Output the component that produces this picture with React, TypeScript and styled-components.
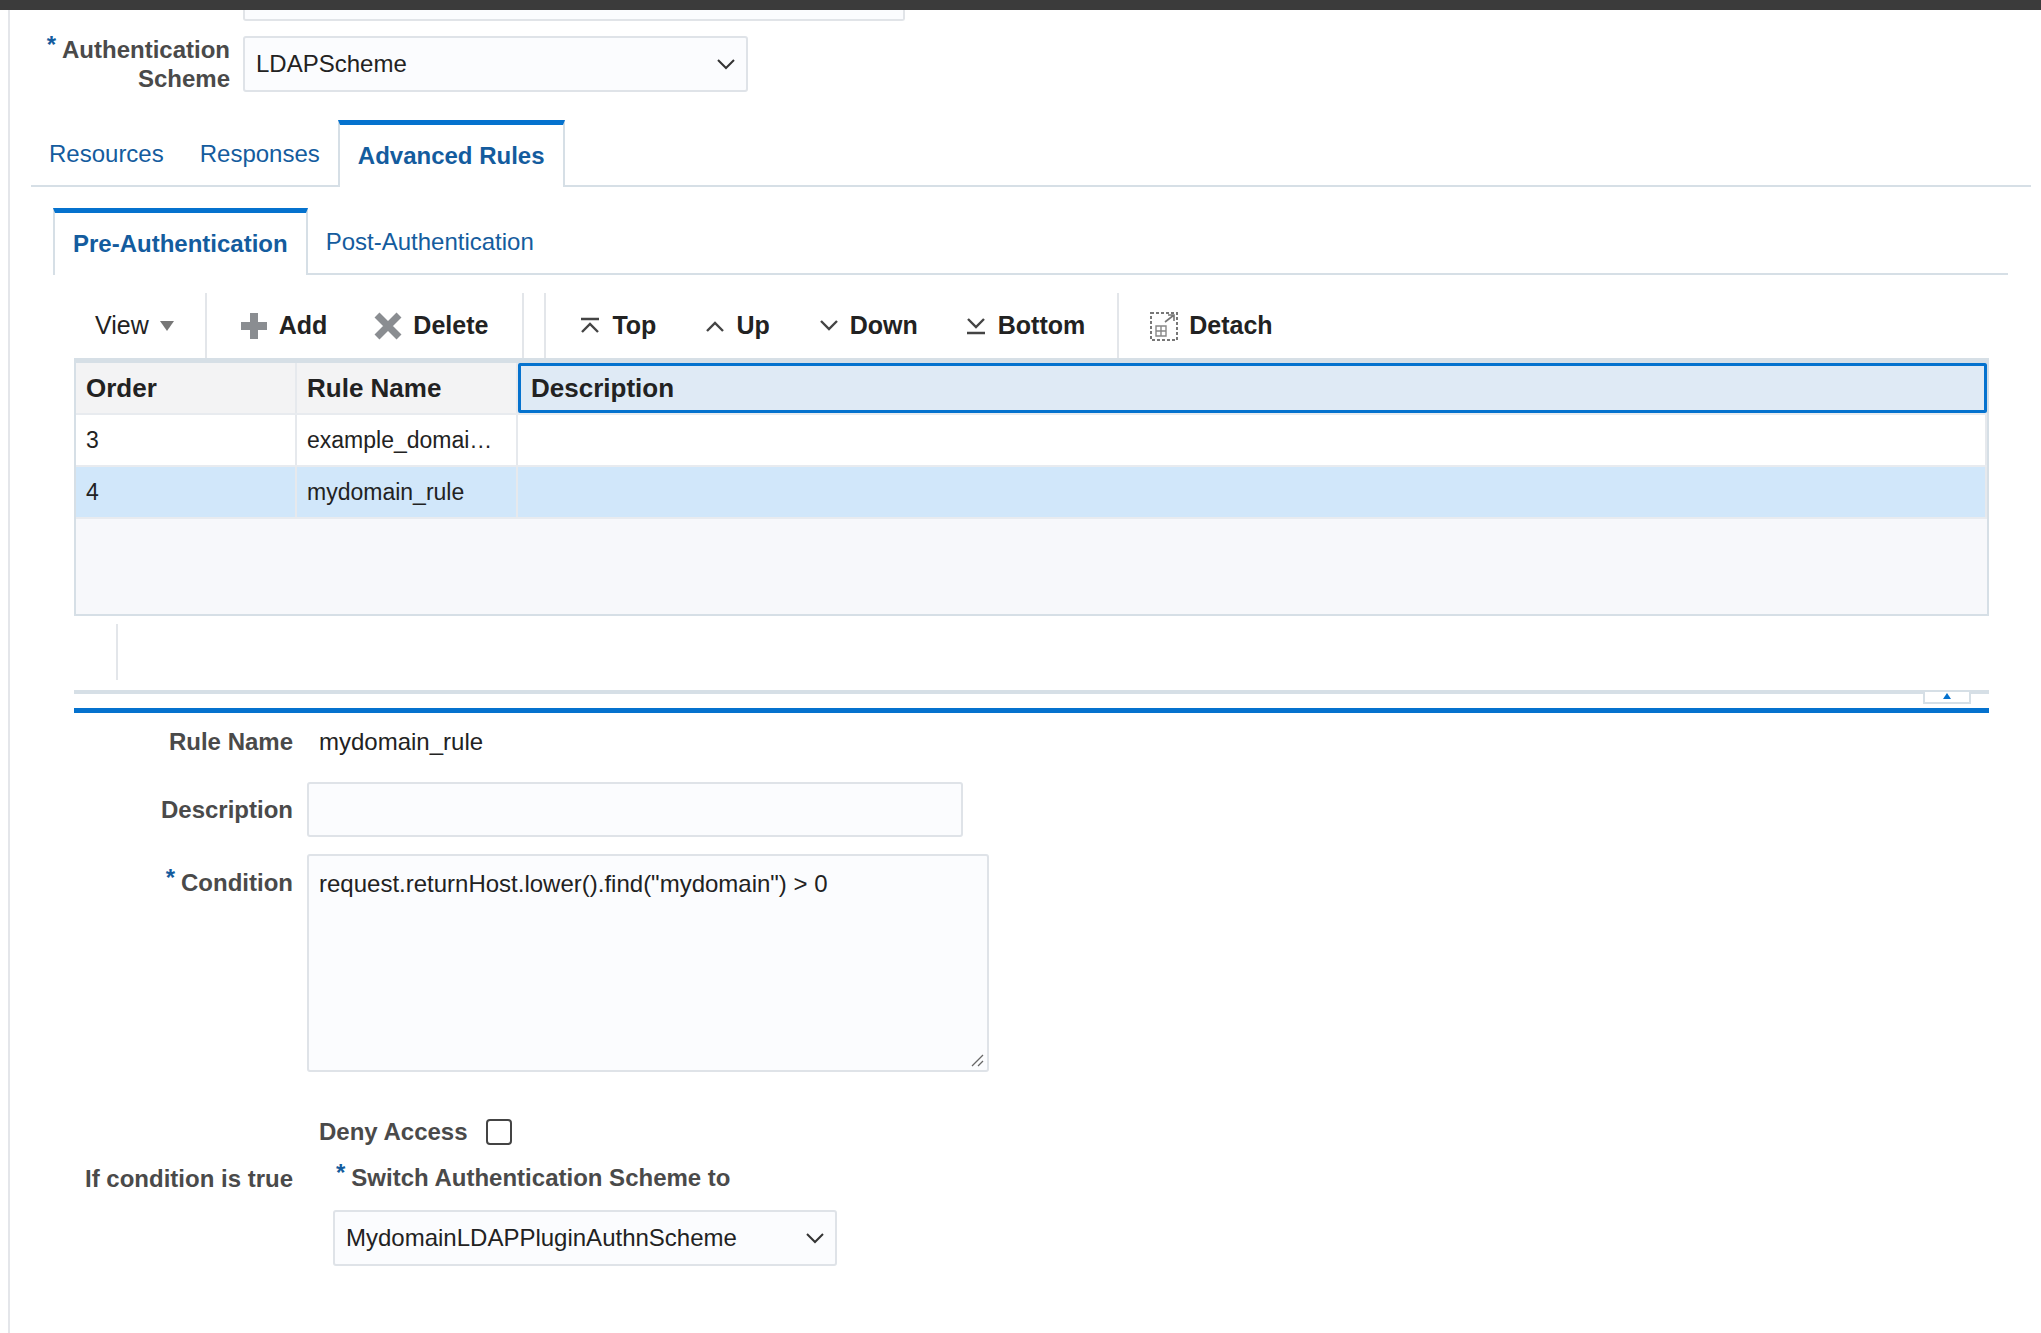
import React from "react"
import styled, { createGlobalStyle } from "styled-components"

const Global = createGlobalStyle`
  body {
    margin: 0;
    background: #fff;
    font-family: "Liberation Sans", Arial, sans-serif;
    color: #333;
  }
`

const Page = styled.div`
  width: 2041px;
  height: 1333px;
  overflow: hidden;
  border-top: 10px solid #3b3b3b;
  box-sizing: border-box;
  position: relative;
`

const LeftRule = styled.div`
  position: absolute;
  left: 8px;
  top: 0;
  bottom: 0;
  width: 2px;
  background: #e4e6ea;
`

const TopStub = styled.div`
  margin-left: 243px;
  width: 658px;
  height: 9px;
  border: 2px solid #e1e4e8;
  border-top: none;
  border-radius: 0 0 3px 3px;
  background: #fbfcfe;
`

const FieldRow = styled.div<{ $top: number; $align?: string }>`
  display: flex;
  align-items: ${p => p.$align || "center"};
  margin-top: ${p => p.$top}px;
`

const Label = styled.div<{ $w: number }>`
  width: ${p => p.$w}px;
  text-align: right;
  font-weight: bold;
  font-size: 24px;
  line-height: 29px;
  color: #4a4a4a;
  flex-shrink: 0;
`

const Star = styled.span`
  color: #145c9e;
  font-weight: bold;
  font-size: 24px;
  vertical-align: top;
  margin-right: 6px;
  position: relative;
  top: -5px;
`

const SelectBox = styled.div<{ $w: number; $ml: number }>`
  width: ${p => p.$w}px;
  height: 56px;
  margin-left: ${p => p.$ml}px;
  box-sizing: border-box;
  border: 2px solid #dfe3e8;
  border-radius: 3px;
  background: #fbfcfe;
  display: flex;
  align-items: center;
  justify-content: space-between;
  padding: 0 10px 0 11px;
  font-size: 24px;
  color: #222;
`

const Chevron = () => (
  <svg width="20" height="12" viewBox="0 0 20 12">
    <path d="M2 2 L10 10 L18 2" stroke="#333" strokeWidth="2" fill="none" />
  </svg>
)

const TabBar = styled.div<{ $ml: number; $w: number; $top: number }>`
  display: flex;
  align-items: flex-end;
  margin-left: ${p => p.$ml}px;
  width: ${p => p.$w}px;
  margin-top: ${p => p.$top}px;
  height: 65px;
  border-bottom: 2px solid #d6dfe6;
`

const Tab = styled.div<{ $active?: boolean }>`
  box-sizing: border-box;
  padding: 0 18px;
  display: flex;
  align-items: center;
  font-size: 24px;
  color: #145c9e;
  font-weight: ${p => (p.$active ? "bold" : "normal")};
  border-top: ${p => (p.$active ? "5px solid #0572ce" : "none")};
  border-left: ${p => (p.$active ? "2px solid #d6dfe6" : "none")};
  border-right: ${p => (p.$active ? "2px solid #d6dfe6" : "none")};
  background: #fff;
  margin-bottom: ${p => (p.$active ? "-2px" : "0")};
  height: ${p => (p.$active ? "67px" : "62px")};
`

const Toolbar = styled.div`
  display: flex;
  align-items: center;
  margin-left: 74px;
  margin-top: 18px;
  height: 65px;
`

const ToolItem = styled.div<{ $ml: number; $plain?: boolean }>`
  display: flex;
  align-items: center;
  gap: 10px;
  margin-left: ${p => p.$ml}px;
  font-size: 25px;
  font-weight: ${p => (p.$plain ? "normal" : "bold")};
  color: #222;
`

const Sep = styled.div<{ $ml: number }>`
  width: 2px;
  height: 65px;
  background: #e3e6ea;
  margin-left: ${p => p.$ml}px;
`

const Table = styled.div`
  margin-left: 74px;
  width: 1915px;
  border: 2px solid #d6dfe6;
  border-top-width: 5px;
  box-sizing: border-box;
  background: #f7f8fb;
  height: 258px;
`

const Row = styled.div<{ $bg: string; $h: number }>`
  display: grid;
  grid-template-columns: 221px 221px 1fr;
  height: ${p => p.$h}px;
  background: ${p => p.$bg};
  border-bottom: 2px solid #e8ebef;
`

const Cell = styled.div<{ $head?: boolean; $focus?: boolean }>`
  display: flex;
  align-items: center;
  padding-left: 10px;
  font-size: ${p => (p.$head ? "26px" : "23px")};
  font-weight: ${p => (p.$head ? "bold" : "normal")};
  color: #222;
  border-right: 2px solid #e6e9ed;
  box-sizing: border-box;
  white-space: nowrap;
  overflow: hidden;
  ${p => p.$focus && "border: 3px solid #0572ce; background: #dfeaf5; border-radius: 2px;"}
`

const Splitter = styled.div`
  margin-left: 74px;
  width: 1915px;
  height: 66px;
  border-bottom: 4px solid #d6dfe6;
  position: relative;
`

const SplitLine = styled.div`
  margin-left: 42px;
  margin-top: 8px;
  width: 2px;
  height: 56px;
  background: #e3e6ea;
`

const Collapse = styled.div`
  position: absolute;
  right: 18px;
  bottom: -14px;
  width: 44px;
  height: 10px;
  border: 2px solid #d6dfe6;
  border-top: none;
  background: #fff;
  display: flex;
  justify-content: center;
`

const BlueRule = styled.div`
  margin-left: 74px;
  width: 1915px;
  height: 5px;
  background: #0572ce;
  margin-top: 14px;
`

const Value = styled.div`
  font-size: 24px;
  color: #222;
  margin-left: 26px;
`

const Input = styled.div<{ $w: number; $h: number }>`
  width: ${p => p.$w}px;
  height: ${p => p.$h}px;
  margin-left: 14px;
  box-sizing: border-box;
  border: 2px solid #dfe3e8;
  border-radius: 3px;
  background: #fbfcfe;
  padding: 14px 10px;
  font-size: 24px;
  color: #222;
  position: relative;
`

const Grip = styled.svg`
  position: absolute;
  right: 2px;
  bottom: 2px;
`

const CheckBox = styled.div`
  width: 22px;
  height: 22px;
  border: 2px solid #444;
  border-radius: 4px;
  margin-left: 18px;
`

const SubLabel = styled.div`
  font-size: 24px;
  font-weight: bold;
  color: #4a4a4a;
`

const SwitchGroup = styled.div`
  margin-left: 43px;
  display: flex;
  flex-direction: column;
  gap: 18px;
`

const Ic = { s: "#444" }

export default function App() {
  return (
    <Page>
      <Global />
      <LeftRule />
      <TopStub />
      <FieldRow $top={14} $align="center">
        <Label $w={230}>
          <Star>*</Star>Authentication
          <br />
          Scheme
        </Label>
        <SelectBox $w={505} $ml={13}>
          LDAPScheme <Chevron />
        </SelectBox>
      </FieldRow>

      <TabBar $ml={31} $w={2000} $top={27}>
        <Tab>Resources</Tab>
        <Tab>Responses</Tab>
        <Tab $active>Advanced Rules</Tab>
      </TabBar>

      <TabBar $ml={53} $w={1955} $top={21}>
        <Tab $active>Pre-Authentication</Tab>
        <Tab>Post-Authentication</Tab>
      </TabBar>

      <Toolbar>
        <ToolItem $ml={21} $plain>
          View
          <svg width="16" height="12" viewBox="0 0 16 12">
            <path d="M1 1 H15 L8 11 Z" fill="#777" />
          </svg>
        </ToolItem>
        <Sep $ml={30} />
        <ToolItem $ml={32}>
          <svg width="30" height="30" viewBox="0 0 30 30">
            <path d="M11 2 H19 V11 H28 V19 H19 V28 H11 V19 H2 V11 H11 Z" fill="#8a8d91" />
          </svg>
          Add
        </ToolItem>
        <ToolItem $ml={46}>
          <svg width="30" height="30" viewBox="0 0 30 30">
            <path d="M4 4 L26 26 M26 4 L4 26" stroke="#8a8d91" strokeWidth="7" />
          </svg>
          Delete
        </ToolItem>
        <Sep $ml={34} />
        <Sep $ml={20} />
        <ToolItem $ml={32}>
          <svg width="24" height="20" viewBox="0 0 24 20">
            <path d="M3 3 H21 M4 16 L12 8 L20 16" stroke={Ic.s} strokeWidth="2.4" fill="none" />
          </svg>
          Top
        </ToolItem>
        <ToolItem $ml={48}>
          <svg width="22" height="14" viewBox="0 0 22 14">
            <path d="M3 12 L11 4 L19 12" stroke={Ic.s} strokeWidth="2.4" fill="none" />
          </svg>
          Up
        </ToolItem>
        <ToolItem $ml={48}>
          <svg width="22" height="14" viewBox="0 0 22 14">
            <path d="M3 2 L11 10 L19 2" stroke={Ic.s} strokeWidth="2.4" fill="none" />
          </svg>
          Down
        </ToolItem>
        <ToolItem $ml={46}>
          <svg width="24" height="20" viewBox="0 0 24 20">
            <path d="M4 3 L12 11 L20 3 M3 17 H21" stroke={Ic.s} strokeWidth="2.4" fill="none" />
          </svg>
          Bottom
        </ToolItem>
        <Sep $ml={32} />
        <ToolItem $ml={30}>
          <svg width="30" height="32" viewBox="0 0 30 32">
            <rect x="2" y="3" width="26" height="27" stroke="#777" strokeWidth="2" strokeDasharray="3 2" fill="none" />
            <path d="M16 12 L25 5 M19 5 H25 V11" stroke="#777" strokeWidth="1.6" fill="none" />
            <path d="M7 16 H17 V26 H7 Z M7 21 H17 M12 16 V26" stroke="#888" strokeWidth="1.4" fill="none" />
          </svg>
          Detach
        </ToolItem>
      </Toolbar>

      <Table>
        <Row $bg="#f3f3f4" $h={50}>
          <Cell $head>Order</Cell>
          <Cell $head>Rule Name</Cell>
          <Cell $head $focus>Description</Cell>
        </Row>
        <Row $bg="#fff" $h={50}>
          <Cell>3</Cell>
          <Cell>example_domai…</Cell>
          <Cell />
        </Row>
        <Row $bg="#d1e7fa" $h={50}>
          <Cell>4</Cell>
          <Cell>mydomain_rule</Cell>
          <Cell />
        </Row>
      </Table>

      <Splitter>
        <SplitLine />
        <Collapse>
          <svg width="10" height="8" viewBox="0 0 10 8">
            <path d="M1 7 L5 1 L9 7 Z" fill="#0572ce" />
          </svg>
        </Collapse>
      </Splitter>
      <BlueRule />

      <FieldRow $top={14}>
        <Label $w={293}>Rule Name</Label>
        <Value>mydomain_rule</Value>
      </FieldRow>
      <FieldRow $top={26}>
        <Label $w={293}>Description</Label>
        <Input $w={656} $h={55} />
      </FieldRow>
      <FieldRow $top={17} $align="flex-start">
        <Label $w={293} style={{ marginTop: 14 }}>
          <Star>*</Star>Condition
        </Label>
        <Input $w={682} $h={218}>
          request.returnHost.lower().find("mydomain") &gt; 0
          <Grip width="16" height="16" viewBox="0 0 16 16">
            <path d="M14 3 L3 14 M14 9 L9 14" stroke="#666" strokeWidth="1.3" />
          </Grip>
        </Input>
      </FieldRow>

      <FieldRow $top={46}>
        <Label $w={293} />
        <SubLabel style={{ marginLeft: 26 }}>Deny Access</SubLabel>
        <CheckBox />
      </FieldRow>
      <FieldRow $top={18} $align="flex-start">
        <Label $w={293}>If condition is true</Label>
        <SwitchGroup>
          <SubLabel>
            <Star>*</Star>Switch Authentication Scheme to
          </SubLabel>
          <SelectBox $w={504} $ml={-3}>
            MydomainLDAPPluginAuthnScheme <Chevron />
          </SelectBox>
        </SwitchGroup>
      </FieldRow>
    </Page>
  )
}
